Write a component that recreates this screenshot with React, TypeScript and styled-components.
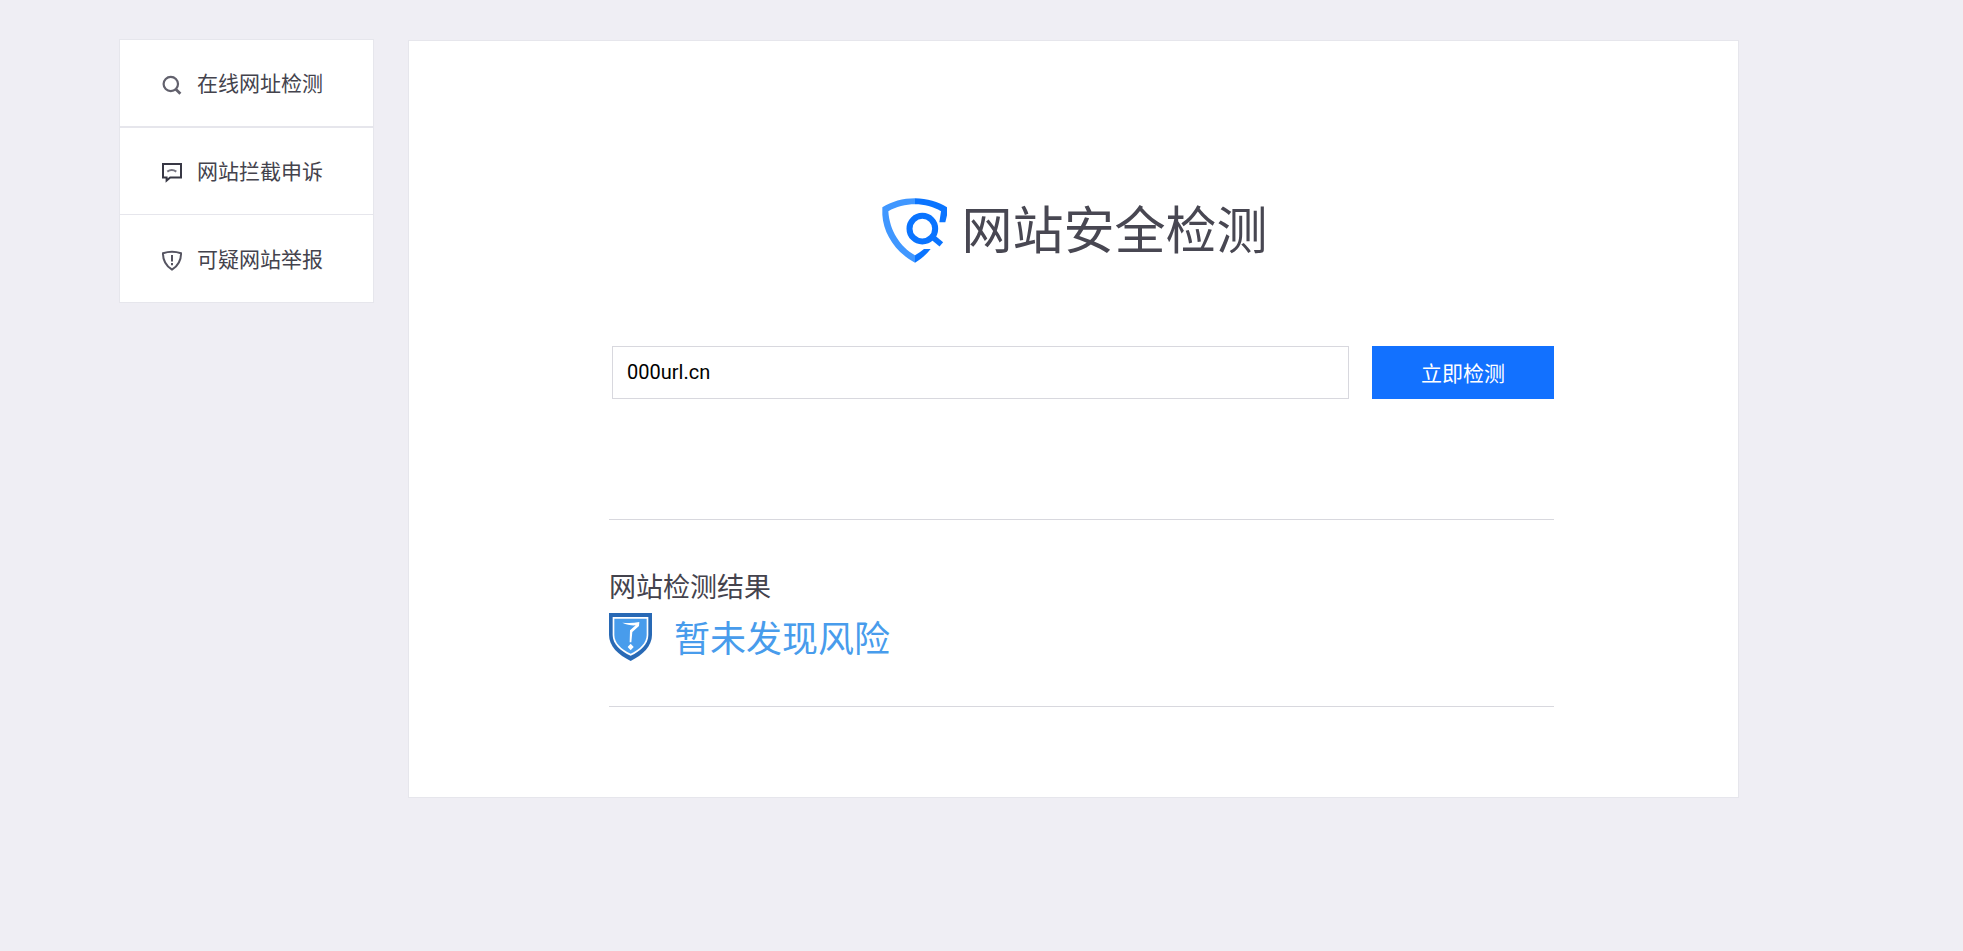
import React, { useState } from 'react';
import styled, { createGlobalStyle } from 'styled-components';

const GlobalStyle = createGlobalStyle`
  * { box-sizing: border-box; }
  body {
    margin: 0;
    background: #efeef4;
    color: #44434d;
    font-family: Roboto, "Noto Sans CJK SC", sans-serif;
  }
`;

const Page = styled.div`
  display: flex;
  align-items: flex-start;
  gap: 34px;
  padding: 39px 224px 40px 119px;
`;

const SideNav = styled.nav`
  flex: 0 0 255px;
  border: 1px solid #e6e6ec;
  background: #fff;
`;

const NavLink = styled.a<{ $divider?: number }>`
  display: flex;
  align-items: center;
  gap: 14px;
  height: 87px;
  padding: 2px 0 0 41px;
  border-bottom: ${({ $divider = 0 }) => $divider}px solid #e6e6ec;
  color: #44434d;
  font-size: 21px;
  font-weight: 400;
  line-height: 30px;
  text-decoration: none;
  white-space: nowrap;

  &:first-child { height: 88px; }
`;

const Panel = styled.main`
  flex: 1;
  min-width: 0;
  margin-top: 1px;
  padding: 146px 184px 90px 200px;
  border: 1px solid #e6e6ec;
  background: #fff;
`;

const Brand = styled.h1`
  display: flex;
  align-items: center;
  justify-content: center;
  gap: 13px;
  height: 86px;
  margin: 0;
  padding-right: 13px;
  color: #484752;
  font-size: 51px;
  font-weight: 400;
  line-height: 76px;
  white-space: nowrap;
`;

const BrandName = styled.span`
  padding-top: 4px;
`;

const SearchForm = styled.form`
  display: flex;
  gap: 23px;
  margin-top: 73px;
  padding-left: 3px;
`;

const UrlInput = styled.input`
  flex: 1;
  min-width: 0;
  height: 53px;
  padding: 0 14px 2px;
  border: 1px solid #d8d8de;
  border-radius: 0;
  background: #fff;
  color: #000;
  font: 400 20px/28px Roboto, "Noto Sans CJK SC", sans-serif;
  outline: none;
`;

const SubmitButton = styled.button`
  flex: 0 0 182px;
  height: 53px;
  padding: 0 0 2px;
  border: 0;
  background: #1271ff;
  color: #fff;
  font: 400 21px/30px "Noto Sans CJK SC", sans-serif;
  cursor: pointer;
`;

const Result = styled.section`
  margin-top: 120px;
  padding: 48px 0 39px;
  border-top: 1px solid #d8d8de;
  border-bottom: 1px solid #d8d8de;
`;

const ResultTitle = styled.h2`
  margin: 0;
  font-size: 27px;
  font-weight: 400;
  line-height: 40px;
`;

const Verdict = styled.p`
  display: flex;
  align-items: flex-start;
  gap: 22px;
  margin: 5px 0 0;
  color: #489cec;
  font-size: 36px;
  font-weight: 400;
  line-height: 54px;
`;

const SearchIcon = () => (
  <svg width="22" height="22" viewBox="0 0 22 22" fill="none" stroke="#62616d" strokeWidth="2.2" aria-hidden="true">
    <circle cx="9.8" cy="11" r="7.2" />
    <path d="M14.8 16.200l4.600 4.600" strokeWidth="2.800" />
  </svg>
);

const MessageIcon = () => (
  <svg width="22" height="22" viewBox="0 0 22 22" fill="none" stroke="#383845" strokeWidth="2" aria-hidden="true">
    <path d="M2 3h18v13.500H9.200L5.600 19.500V16.500H2z" />
    <path d="M6.300 10.600c2.600-2 6.300-2 9 0" stroke="#777682" />
  </svg>
);

const ReportIcon = () => (
  <svg width="22" height="22" viewBox="0 0 22 22" fill="none" stroke="#555461" strokeWidth="2" aria-hidden="true">
    <path d="M2 4.200Q11 1.200 20 4.200C20.300 10.500 17 17.200 11 20.600C5 17.200 1.700 10.500 2 4.200z" />
    <path d="M11 6v6.400M11 14v2.200" />
  </svg>
);

const BrandLogo = () => (
  <svg width="66" height="65" viewBox="65 56 198 195" fill="none" aria-hidden="true">
    <path d="M164 57C128 57 93 67 66 84V106C69 164 108 220 164 250V228C119 202 88 155 84 96C107 82 136 75 164 75Z" fill="#4097ff" />
    <path d="M164 57C200 58 234 67 260 84V108L255 129H237L242 96C219 82 192 75 164 75Z" fill="#0a74ff" />
    <path d="M164 228C174 222 183 216 191 209H211C197 226 182 240 164 250Z" fill="#0a74ff" />
    <circle cx="186" cy="148" r="38.500" stroke="#0a74ff" strokeWidth="18" />
    <path d="M214 171L243 195" stroke="#0a74ff" strokeWidth="17" />
  </svg>
);

const VerdictShield = () => (
  <svg width="43" height="48" viewBox="0 0 129 144" aria-hidden="true">
    <path d="M0 0H129V66C129 99 101 126 65 144C28 126 0 99 0 66Z" fill="#2869b5" />
    <path d="M11 12H118V66C118 93 95 115 65 128C34 115 11 93 11 66Z" fill="#fff" />
    <path d="M16 17H113V66C113 89 93 109 65 122C36 109 16 89 16 66Z" fill="#489cec" />
    <path d="M40 29C56 31 73 31 91 27L90 39L70 57L67 88H62L63 52L80 37C67 38 53 35 40 29Z" fill="#fff" />
    <path d="M65 92L74 102L65 112L56 102Z" fill="#fff" />
  </svg>
);

const navItems = [
  { label: '在线网址检测', icon: <SearchIcon />, divider: 2 },
  { label: '网站拦截申诉', icon: <MessageIcon />, divider: 1 },
  { label: '可疑网站举报', icon: <ReportIcon />, divider: 0 },
];

export default function App() {
  const [url, setUrl] = useState('000url.cn');

  return (
    <>
      <GlobalStyle />
      <Page>
        <SideNav>
          {navItems.map(({ label, icon, divider }) => (
            <NavLink key={label} href="#" $divider={divider}>
              {icon}
              {label}
            </NavLink>
          ))}
        </SideNav>
        <Panel>
          <Brand>
            <BrandLogo />
            <BrandName>网站安全检测</BrandName>
          </Brand>
          <SearchForm onSubmit={(event) => event.preventDefault()}>
            <UrlInput
              type="text"
              aria-label="网址"
              value={url}
              onChange={(event) => setUrl(event.target.value)}
            />
            <SubmitButton type="submit">立即检测</SubmitButton>
          </SearchForm>
          <Result>
            <ResultTitle>网站检测结果</ResultTitle>
            <Verdict>
              <VerdictShield />
              暂未发现风险
            </Verdict>
          </Result>
        </Panel>
      </Page>
    </>
  );
}
